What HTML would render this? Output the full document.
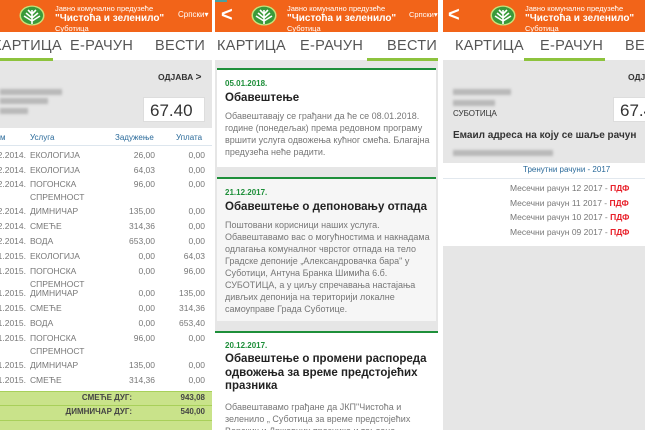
<!DOCTYPE html>
<html><head><meta charset="utf-8"><style>
*{margin:0;padding:0;box-sizing:border-box}
body{width:645px;height:430px;overflow:hidden;background:#fff;font-family:"Liberation Sans","DejaVu Sans",sans-serif;position:relative}
.p{position:absolute;top:0;height:430px;overflow:hidden;background:#e6e6e6}
.hd{position:absolute;top:0;left:0;right:0;height:32px;background:#f26419}
.a{position:absolute;white-space:nowrap}
.ht{color:#fff;font-size:7.5px;line-height:9px}
.ht b{font-weight:bold;display:block;line-height:11px;font-size:10px}
.tabs{position:absolute;top:32px;left:0;right:0;height:28px;background:#fff}
.tab{position:absolute;top:6px;font-size:14.5px;color:#555;letter-spacing:0.3px}
.ul{position:absolute;top:58px;height:3px;background:#8dc33d}
.s{font-size:8.5px;color:#777;line-height:13px}
.r{text-align:right}
.blur{position:absolute;height:6px;background:#b8b8b8;filter:blur(1.3px)}
.box{position:absolute;background:#fff;border:1px solid #ddd;font-size:17px;color:#333;padding:3px 6px}
.card{position:absolute;left:2px;right:2px;background:#fff;border-top:2px solid #1e8f3a}
.dt{color:#1e8f3a;font-weight:bold;font-size:8px}
.ti{color:#222;font-weight:bold;font-size:11.5px;line-height:13.5px}
.bd{color:#777;font-size:9px;line-height:12px}
</style></head><body>

<!-- Panel 1 -->
<div class="p" style="left:0;width:212px">
<div class="hd">
<svg class="a" style="left:19px;top:5px" width="26" height="21" viewBox="0 0 26 21"><ellipse cx="13" cy="10.5" rx="12.5" ry="10" fill="#c8e27a"/><ellipse cx="13" cy="10.5" rx="11" ry="8.7" fill="#3a9a3a"/><path d="M13 19V5M13 9l-4-4M13 9l4-4M13 13l-6-5M13 13l6-5M13 16l-8-5M13 16l8-5" stroke="#fff" stroke-width="1.6" fill="none"/></svg>
<div class="a ht" style="left:55px;top:4px">Јавно комунално предузеће<b>"Чистоћа и зеленило"</b>Суботица</div>
<div class="a" style="left:178px;top:10px;color:#fff;font-size:8px">Српски▾</div>
</div>
<div class="tabs"><div class="tab" style="left:-7px">КАРТИЦА</div><div class="tab" style="left:70px">Е-РАЧУН</div><div class="tab" style="left:155px">ВЕСТИ</div></div>
<div class="ul" style="left:0;width:53px"></div>
<div class="a" style="left:158px;top:72px;font-size:8.5px;color:#333;font-weight:bold">ОДЈАВА <span style="font-size:10px">&gt;</span></div>
<div class="blur" style="left:0;top:89px;width:62px"></div><div class="blur" style="left:0;top:98px;width:48px"></div><div class="blur" style="left:0;top:108px;width:28px"></div>
<div class="box" style="left:143px;top:97px;width:62px;height:25px">67.40 <span style="font-size:9px">м²</span></div>
<div class="a" style="left:0;top:128px;width:212px;height:264px;background:#fff"></div>
<div class="a" style="left:0;top:145px;width:212px;height:1px;background:#dde6ee"></div>
<div class="a" style="left:0;top:133px;font-size:8px;color:#2a6a9a">м</div>
<div class="a" style="left:30px;top:133px;font-size:8px;color:#2a6a9a">Услуга</div>
<div class="a" style="left:115px;top:133px;font-size:8px;color:#2a6a9a">Задужење</div>
<div class="a" style="left:176px;top:133px;font-size:8px;color:#2a6a9a">Уплата</div>
<div id="rows"></div>
<div class="a" style="left:0;top:391px;width:212px;height:14px;background:#c9e38a;border-top:1px solid #a8d05a"></div>
<div class="a" style="left:0;top:405px;width:212px;height:15px;background:#c9e38a;border-top:1px solid #a8d05a"></div>
<div class="a" style="left:0;top:420px;width:212px;height:10px;background:#c9e38a;border-top:1px solid #a8d05a"></div>
<div class="a s r" style="right:80px;top:391px;color:#444;font-weight:bold;font-size:8px">СМЕЋЕ ДУГ:</div>
<div class="a s r" style="right:7px;top:391px;color:#444;font-weight:bold;font-size:8px">943,08</div>
<div class="a s r" style="right:80px;top:405px;color:#444;font-weight:bold;font-size:8px">ДИМНИЧАР ДУГ:</div>
<div class="a s r" style="right:7px;top:405px;color:#444;font-weight:bold;font-size:8px">540,00</div>
</div>

<!-- Panel 2 -->
<div class="p" style="left:215px;width:223px">
<div class="hd">
<div class="a" style="left:0;top:0;width:12px;height:2px;background:#4aa0a0"></div>
<div class="a" style="left:6px;top:4px;color:#fff;font-size:20px;font-weight:bold">&lt;</div>
<svg class="a" style="left:36px;top:5px" width="26" height="21" viewBox="0 0 26 21"><ellipse cx="13" cy="10.5" rx="12.5" ry="10" fill="#c8e27a"/><ellipse cx="13" cy="10.5" rx="11" ry="8.7" fill="#3a9a3a"/><path d="M13 19V5M13 9l-4-4M13 9l4-4M13 13l-6-5M13 13l6-5M13 16l-8-5M13 16l8-5" stroke="#fff" stroke-width="1.6" fill="none"/></svg>
<div class="a ht" style="left:72px;top:4px">Јавно комунално предузеће<b>"Чистоћа и зеленило"</b>Суботица</div>
<div class="a" style="left:194px;top:10px;color:#fff;font-size:7.5px">Српски▾</div>
</div>
<div class="tabs"><div class="tab" style="left:2px">КАРТИЦА</div><div class="tab" style="left:85px">Е-РАЧУН</div><div class="tab" style="left:172px">ВЕСТИ</div></div>
<div class="ul" style="left:152px;width:71px"></div>
<div class="card" style="top:68px;height:99px">
<div class="a dt" style="left:8px;top:9px">05.01.2018.</div>
<div class="a ti" style="left:8px;top:22px">Обавештење</div>
<div class="a bd" style="left:8px;top:40px">Обавештавају се грађани да ће се 08.01.2018.<br>године (понедељак) према редовном програму<br>вршити услуга одвожења кућног смећа. Благајна<br>предузећа неће радити.</div>
</div>
<div class="card" style="top:177px;height:144px;background:#f6f6f6">
<div class="a dt" style="left:8px;top:9px">21.12.2017.</div>
<div class="a ti" style="left:8px;top:22px">Обавештење о депоновању отпада</div>
<div class="a bd" style="left:8px;top:40px">Поштовани корисници наших услуга.<br>Обавештавамо вас о могућностима и накнадама<br>одлагања комуналног чврстог отпада на тело<br>Градске депоније „Александровачка бара" у<br>Суботици, Антуна Бранка Шимића 6.б.<br>СУБОТИЦА, а у циљу спречавања настајања<br>дивљих депонија на територији локалне<br>самоуправе Града Суботице.</div>
</div>
<div class="card" style="top:331px;height:110px;left:0;right:0">
<div class="a dt" style="left:10px;top:8px">20.12.2017.</div>
<div class="a ti" style="left:10px;top:20px">Обавештење о промени распореда<br>одвожења за време предстојећих<br>празника</div>
<div class="a bd" style="left:10px;top:68px">Обавештавамо грађане да ЈКП"Чистоћа и<br>зеленило „ Суботица за време предстојећих<br>Верских и Државних празника и то: дана</div>
</div>
</div>

<!-- Panel 3 -->
<div class="p" style="left:443px;width:202px">
<div class="hd">
<div class="a" style="left:5px;top:4px;color:#fff;font-size:20px;font-weight:bold">&lt;</div>
<svg class="a" style="left:47px;top:5px" width="26" height="21" viewBox="0 0 26 21"><ellipse cx="13" cy="10.5" rx="12.5" ry="10" fill="#c8e27a"/><ellipse cx="13" cy="10.5" rx="11" ry="8.7" fill="#3a9a3a"/><path d="M13 19V5M13 9l-4-4M13 9l4-4M13 13l-6-5M13 13l6-5M13 16l-8-5M13 16l8-5" stroke="#fff" stroke-width="1.6" fill="none"/></svg>
<div class="a ht" style="left:82px;top:4px">Јавно комунално предузеће<b>"Чистоћа и зеленило"</b>Суботица</div>
</div>
<div class="tabs"><div class="tab" style="left:12px">КАРТИЦА</div><div class="tab" style="left:97px">Е-РАЧУН</div><div class="tab" style="left:182px">ВЕСТИ</div></div>
<div class="ul" style="left:81px;width:81px"></div>
<div class="a" style="left:185px;top:72px;font-size:8.5px;color:#333;font-weight:bold">ОДЈАВА</div>
<div class="blur" style="left:10px;top:89px;width:58px"></div><div class="blur" style="left:10px;top:100px;width:42px"></div>
<div class="a" style="left:10px;top:109px;font-size:8px;color:#333">СУБОТИЦА</div>
<div class="box" style="left:170px;top:97px;width:50px;height:25px">67.40</div>
<div class="a" style="left:10px;top:130px;font-size:10px;color:#333;font-weight:bold">Емаил адреса на коју се шаље рачун</div>
<div class="blur" style="left:10px;top:150px;width:100px"></div>
<div class="a" style="left:0;top:163px;width:202px;height:83px;background:#fff"></div>
<div class="a" style="left:0;top:178px;width:202px;height:1px;background:#e2e8ee"></div>
<div class="a" style="left:80px;top:165px;font-size:8px;color:#2a6a9a">Тренутни рачуни - 2017</div>
<div class="a s" style="left:67px;top:182px">Месечни рачун 12 2017 - <span style="color:#e8202a;font-weight:bold">ПДФ</span></div>
<div class="a s" style="left:67px;top:197px">Месечни рачун 11 2017 - <span style="color:#e8202a;font-weight:bold">ПДФ</span></div>
<div class="a s" style="left:67px;top:211px">Месечни рачун 10 2017 - <span style="color:#e8202a;font-weight:bold">ПДФ</span></div>
<div class="a s" style="left:67px;top:226px">Месечни рачун 09 2017 - <span style="color:#e8202a;font-weight:bold">ПДФ</span></div>
</div>

<script>
var d=[[155,"2.2014.","ЕКОЛОГИЈА","26,00","0,00"],[170,"2.2014.","ЕКОЛОГИЈА","64,03","0,00"],[184,"2.2014.","ПОГОНСКА<br>СПРЕМНОСТ","96,00","0,00"],[211,"2.2014.","ДИМНИЧАР","135,00","0,00"],[226,"2.2014.","СМЕЋЕ","314,36","0,00"],[241,"2.2014.","ВОДА","653,00","0,00"],[256,"1.2015.","ЕКОЛОГИЈА","0,00","64,03"],[271,"1.2015.","ПОГОНСКА<br>СПРЕМНОСТ","0,00","96,00"],[293,"1.2015.","ДИМНИЧАР","0,00","135,00"],[308,"1.2015.","СМЕЋЕ","0,00","314,36"],[323,"1.2015.","ВОДА","0,00","653,40"],[338,"1.2015.","ПОГОНСКА<br>СПРЕМНОСТ","96,00","0,00"],[365,"1.2015.","ДИМНИЧАР","135,00","0,00"],[380,"1.2015.","СМЕЋЕ","314,36","0,00"]];
var h="";d.forEach(function(r){var t=r[0]-6;h+='<div class="a s r" style="right:186px;top:'+t+'px">'+r[1]+'</div><div class="a s" style="left:30px;top:'+t+'px">'+r[2]+'</div><div class="a s r" style="right:57px;top:'+t+'px">'+r[3]+'</div><div class="a s r" style="right:7px;top:'+t+'px">'+r[4]+'</div>';});
document.getElementById("rows").innerHTML=h;
</script>
</body></html>
